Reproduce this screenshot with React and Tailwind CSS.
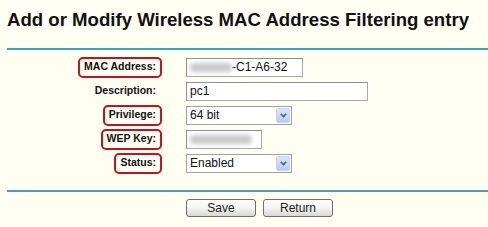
import React from "react";

const RED = "border-[#c8101e]";

function Label({ text, boxed }) {
  return (
    <div className="w-[186px] pr-[24px] flex justify-end items-center">
      <span
        className={`inline-flex items-center h-[21px] px-[4px] rounded-[5px] border-2 font-bold text-[10.5px] text-[#111] ${
          boxed ? RED : "border-transparent"
        }`}
      >
        {text}
      </span>
    </div>
  );
}

function TextBox({ width, children }) {
  return (
    <div
      className={`${width} h-[19px] bg-white border border-[#a8a8a8] border-t-[#8f8f8f] border-l-[#8f8f8f] flex items-center px-[3px] text-[12px] text-[#111] overflow-hidden`}
    >
      {children}
    </div>
  );
}

function Blur({ width }) {
  return <div className={`${width} h-[9px] bg-[#c9c9c9] blur-[2px] rounded-sm`} />;
}

function Select({ value }) {
  return (
    <div className="w-[106px] h-[19px] bg-white border border-[#a0a0a0] flex items-center text-[12px] text-[#111]">
      <span className="flex-1 pl-[3px]">{value}</span>
      <div className="w-[14px] h-[15px] mr-[1px] rounded-[2px] bg-gradient-to-b from-[#dbe6fd] to-[#b7cbf5] border border-[#c3d3f7] flex items-center justify-center">
        <svg width="7" height="5" viewBox="0 0 7 5">
          <path d="M0.8 0.8 L3.5 3.6 L6.2 0.8" fill="none" stroke="#4d6185" strokeWidth="1.6" />
        </svg>
      </div>
    </div>
  );
}

function Button({ children }) {
  return (
    <button className="w-[70px] h-[18px] rounded-[3px] border border-[#6f6f6f] bg-gradient-to-b from-white via-[#f4f4f0] to-[#d8d8d2] text-[12px] text-[#222] leading-none">
      {children}
    </button>
  );
}

function Row({ label, boxed, children }) {
  return (
    <div className="flex items-center h-[24px]">
      <Label text={label} boxed={boxed} />
      {children}
    </div>
  );
}

export default function App() {
  return (
    <div
      className="w-[488px] h-[227px] bg-[#fefef3] overflow-hidden"
      style={{ fontFamily: '"Liberation Sans", Arial, sans-serif' }}
    >
      <h1 className="pl-[7px] pt-[9px] h-[31px] text-[18.6px] leading-[22px] font-bold text-[#111]">
        Add or Modify Wireless MAC Address Filtering entry
      </h1>
      <div className="ml-[7px] mt-[17px] h-[2px] bg-[#4e9cb1]" />

      <div className="mt-[5px]">
        <Row label="MAC Address:" boxed>
          <TextBox width="w-[117px]">
            <Blur width="w-[42px]" />
            <span>-C1-A6-32</span>
          </TextBox>
        </Row>
        <Row label="Description:">
          <TextBox width="w-[182px]">pc1</TextBox>
        </Row>
        <Row label="Privilege:" boxed>
          <Select value="64 bit" />
        </Row>
        <Row label="WEP Key:" boxed>
          <TextBox width="w-[76px]">
            <Blur width="w-[62px]" />
          </TextBox>
        </Row>
        <Row label="Status:" boxed>
          <Select value="Enabled" />
        </Row>
      </div>

      <div className="ml-[7px] mt-[15px] h-[2px] bg-[#4e9cb1]" />
      <div className="mt-[7px] pl-[186px] flex gap-[7px]">
        <Button>Save</Button>
        <Button>Return</Button>
      </div>
    </div>
  );
}
